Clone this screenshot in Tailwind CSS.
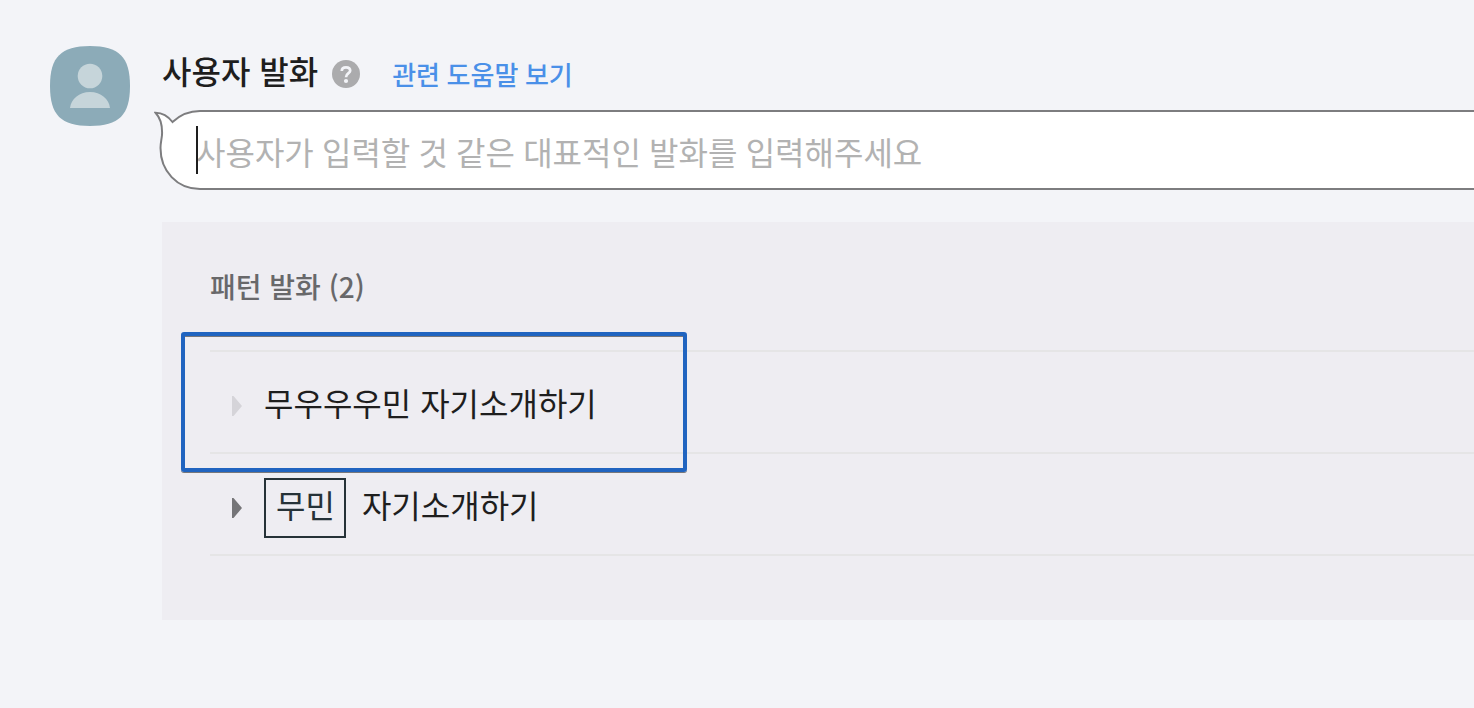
<!DOCTYPE html>
<html lang="ko">
<head>
<meta charset="utf-8">
<meta name="viewport" content="width=device-width, initial-scale=1">
<title>사용자 발화</title>
<script src="https://cdn.jsdelivr.net/npm/@tailwindcss/browser@4"></script>
</head>
<body class="min-h-screen overflow-x-hidden bg-[#f3f4f8] font-['Noto_Sans_CJK_KR',sans-serif] text-[#1e1e1e]">
<main class="flex gap-8 pt-[46px] pl-[50px]">
  <svg class="size-20 shrink-0" viewBox="0 0 80 80" role="img" aria-label="사용자">
    <path d="M40 0C69 0 80 11 80 40S69 80 40 80 0 69 0 40 11 0 40 0Z" fill="#8cabb8"/>
    <circle cx="40" cy="30" r="12.300" fill="#c6d5da"/>
    <path d="M20 62C21 53 29 46 40 46S59 53 60 62Z" fill="#c6d5da"/>
  </svg>
  <section class="min-w-0 flex-1">
    <header class="flex h-16 items-start">
      <h1 class="text-[32px] leading-[48px] font-medium"><label for="utterance">사용자 발화</label></h1>
      <button type="button" class="mt-3.5 ml-3.5 size-7 shrink-0 rounded-full" aria-label="도움말">
        <svg class="size-7" viewBox="0 0 28 28" fill="none" aria-hidden="true">
          <circle cx="14" cy="14" r="14" fill="#ababad"/>
          <path d="M9.800 11C9.800 8.600 11.600 7.400 14 7.400S18.200 8.700 18.200 10.800C18.200 13.200 14 13.300 14 17.200" stroke="#f3f4f8" stroke-width="2.700"/>
          <circle cx="14" cy="21" r="2.100" fill="#f3f4f8"/>
        </svg>
      </button>
      <a href="#help" class="mt-2 ml-8 font-[Lato,'Noto_Sans_CJK_KR',sans-serif] text-[26px] leading-[42px] font-medium text-[#4a90e8]">관련 도움말 보기</a>
    </header>
    <div class="-ml-2 flex h-20">
      <svg class="h-20 w-12 shrink-0" viewBox="0 0 48 80" fill="none" aria-hidden="true">
        <path d="M48 1H46C34 1 26 5 18.500 12C14 6 8 2.800 1.500 2.700C6.500 8 8.500 16 8 25C7.500 30 6.500 33 6.500 38C6.500 61 23 79 46 79H48" fill="#fff" stroke="#7d7d7f" stroke-width="2"/>
      </svg>
      <div class="relative flex flex-1 items-center border-y-2 border-[#7d7d7f] bg-white">
        <span class="absolute top-3.5 -left-1.5 h-12 w-0.5 bg-[#1e1e1e]" aria-hidden="true"></span>
        <input id="utterance" type="text" placeholder="사용자가 입력할 것 같은 대표적인 발화를 입력해주세요" class="-ml-1.5 h-14 w-full bg-transparent pt-1 font-[Lato,'Noto_Sans_CJK_KR',sans-serif] text-[32px] leading-[48px] caret-transparent outline-none placeholder:text-[#b2b2b2]">
      </div>
    </div>
    <section class="mt-8 bg-[#eeedf2] pb-16 pl-12">
      <h2 class="flex h-32 items-center text-[28px] leading-10 font-medium text-[#68686a]">패턴 발화 (2)</h2>
      <ul class="border-t-2 border-[#e5e5e6] text-[32px] leading-[48px]">
        <li class="relative flex h-[102px] items-center border-b-2 border-[#e5e5e6]">
          <span class="pointer-events-none absolute -top-5 -left-[29px] h-[140px] w-[506px] rounded-[3px] border-4 border-[#2064c0] shadow-[0_1px_0_#77777b,inset_0_1px_0_#77777b]" aria-hidden="true"></span>
          <button type="button" class="ml-[22px] h-5 w-8 text-[#d5d4d9]" aria-label="펼치기">
            <svg class="mt-1 h-5 w-2.5" viewBox="0 0 10 20" fill="currentColor" aria-hidden="true"><path d="M0 0H1.500L10 10L1.500 20H0Z"/></svg>
          </button>
          <span>무우우우민 자기소개하기</span>
        </li>
        <li class="flex h-[102px] items-center border-b-2 border-[#e5e5e6]">
          <button type="button" class="ml-[22px] h-5 w-8 text-[#757578]" aria-label="펼치기">
            <svg class="mt-1 h-5 w-2.5" viewBox="0 0 10 20" fill="currentColor" aria-hidden="true"><path d="M0 0H1.500L10 10L1.500 20H0Z"/></svg>
          </button>
          <mark class="mt-2 mr-4 h-[60px] border-2 border-[#263238] bg-transparent pr-[9px] pl-2.5 text-[#263238]">무민</mark>
          <span>자기소개하기</span>
        </li>
      </ul>
    </section>
  </section>
</main>
</body>
</html>
